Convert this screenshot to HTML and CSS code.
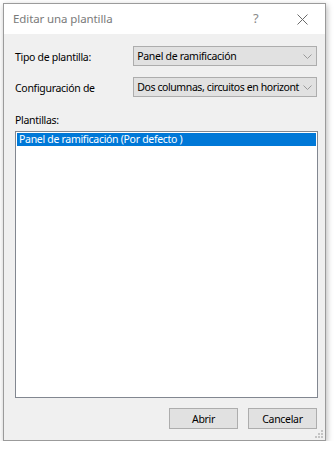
FILE: index.html
```html
<!DOCTYPE html>
<html lang="es">
<head>
<meta charset="utf-8">
<title>Editar una plantilla</title>
<link rel="stylesheet" href="styles.css">
</head>
<body>
<div class="window">
  <div class="titlebar">
    <span class="title">Editar una plantilla</span>
    <span class="help">?</span>
    <span class="close">
      <svg width="11" height="11" viewBox="0 0 11 11"><path d="M0.5 0.5L10.5 10.5M10.5 0.5L0.5 10.5" stroke="#6a6a6a" stroke-width="1" fill="none"/></svg>
    </span>
  </div>
  <div class="content">
    <div class="row">
      <span class="label">Tipo de plantilla:</span>
      <div class="combo">
        <span class="combo-text">Panel de ramificación</span>
        <svg class="chev" width="9" height="5" viewBox="0 0 9 5"><path d="M0.5 0.5L4.5 4.5L8.5 0.5" stroke="#9a9a9a" stroke-width="1" fill="none"/></svg>
      </div>
    </div>
    <div class="row row2">
      <span class="label">Configuración de</span>
      <div class="combo">
        <span class="combo-text tight">Dos columnas, circuitos en horizont</span>
        <svg class="chev" width="9" height="5" viewBox="0 0 9 5"><path d="M0.5 0.5L4.5 4.5L8.5 0.5" stroke="#9a9a9a" stroke-width="1" fill="none"/></svg>
      </div>
    </div>
    <div class="list-label">Plantillas:</div>
    <div class="listbox">
      <div class="item selected">Panel de ramificación (Por defecto )</div>
    </div>
    <div class="buttons">
      <button class="btn">Abrir</button>
      <button class="btn">Cancelar</button>
    </div>
    <div class="grip">
      <svg width="8" height="8" viewBox="0 0 8 8">
        <rect x="6" y="0" width="2" height="2" fill="#c4c4c4"/>
        <rect x="3" y="3" width="2" height="2" fill="#c4c4c4"/>
        <rect x="6" y="3" width="2" height="2" fill="#c4c4c4"/>
        <rect x="0" y="6" width="2" height="2" fill="#c4c4c4"/>
        <rect x="3" y="6" width="2" height="2" fill="#c4c4c4"/>
        <rect x="6" y="6" width="2" height="2" fill="#c4c4c4"/>
      </svg>
    </div>
  </div>
</div>
</body>
</html>
```
FILE: styles.css
```css
html, body {
  margin: 0;
  padding: 0;
  background: #ffffff;
}
body {
  font-family: "Noto Sans", "Open Sans", sans-serif;
  font-size: 10.5px;
  letter-spacing: -0.3px;
  color: #000;
  padding: 3px 0 0 3px;
}
.window {
  width: 321px;
  height: 436px;
  border: 1px solid #9b9b9b;
  background: #f0f0f0;
  box-shadow: 1px 2px 6px rgba(0, 0, 0, 0.28);
  display: flex;
  flex-direction: column;
}
.titlebar {
  height: 30px;
  background: #ffffff;
  display: flex;
  align-items: center;
  padding-left: 9px;
}
.title {
  flex: 1;
  color: #7a7a7a;
  font-size: 11.5px;
  letter-spacing: -0.1px;
  padding-bottom: 1px;
}
.help {
  color: #8a8a8a;
  font-size: 13px;
  width: 12px;
  margin-right: 32px;
  padding-bottom: 2px;
}
.close {
  width: 11px;
  height: 11px;
  margin-right: 17px;
  display: flex;
}
.content {
  flex: 1;
  padding: 12px 8px 0 11px;
  display: flex;
  flex-direction: column;
  position: relative;
}
.row {
  display: flex;
  align-items: center;
  height: 20px;
}
.row2 {
  margin-top: 11px;
}
.label {
  width: 119px;
  padding-top: 1px;
}
.combo {
  width: 180px;
  height: 18px;
  border: 1px solid #adadad;
  background: #e1e1e1;
  display: flex;
  align-items: center;
  padding-left: 3px;
  overflow: hidden;
}
.combo-text {
  flex: 1;
  white-space: nowrap;
  overflow: hidden;
}
.combo-text.tight {
  letter-spacing: -0.4px;
}
.chev {
  margin: 1px 4px 0 2px;
  flex: none;
}
.list-label {
  margin-top: 15px;
  height: 16px;
  line-height: 16px;
}
.listbox {
  margin-top: 3px;
  width: 299px;
  height: 263px;
  border: 1px solid #828790;
  background: #ffffff;
  padding: 1px 1px;
}
.item {
  height: 13px;
  line-height: 13px;
  padding-left: 2px;
  white-space: nowrap;
}
.item.selected {
  background: #0078d7;
  color: #ffffff;
}
.buttons {
  margin-top: 10px;
  display: flex;
  justify-content: flex-end;
  gap: 10px;
}
.btn {
  width: 69px;
  height: 21px;
  border: 1px solid #adadad;
  background: #e1e1e1;
  font-family: inherit;
  font-size: 10.5px;
  letter-spacing: -0.3px;
  color: #000;
  padding: 0;
  margin: 0;
}
.grip {
  position: absolute;
  right: 2px;
  bottom: 2px;
  width: 8px;
  height: 8px;
  display: flex;
}
```
